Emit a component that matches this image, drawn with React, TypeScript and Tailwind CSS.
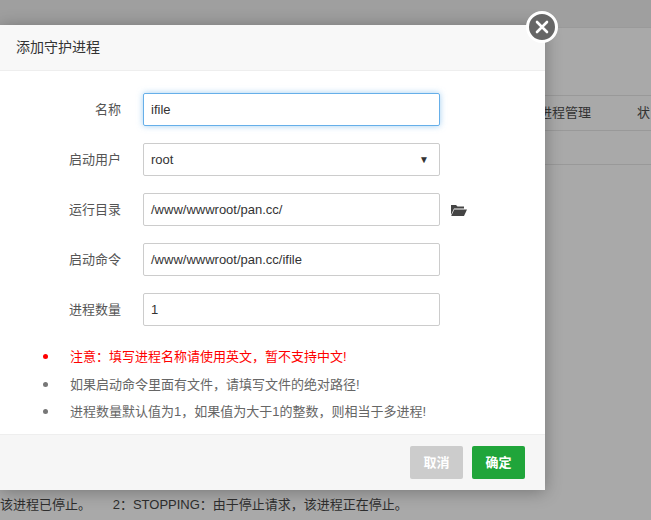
import React from 'react';

const font = { fontFamily: '"Liberation Sans", "Noto Sans CJK SC", sans-serif' };

const rows = [
  { label: '名称', value: 'ifile', focus: true },
  { label: '启动用户', value: 'root', select: true },
  { label: '运行目录', value: '/www/wwwroot/pan.cc/', folder: true },
  { label: '启动命令', value: '/www/wwwroot/pan.cc/ifile' },
  { label: '进程数量', value: '1' },
];

const tips = [
  { text: '注意：填写进程名称请使用英文，暂不支持中文!', red: true },
  { text: '如果启动命令里面有文件，请填写文件的绝对路径!' },
  { text: '进程数量默认值为1，如果值为大于1的整数，则相当于多进程!' },
];

const App: React.FC = () => {
  return (
    <div className="relative w-[651px] h-[520px] overflow-hidden bg-[#a9a9a9] text-[#333]" style={font}>
      {/* dimmed page behind */}
      <div className="h-[27px] bg-[#9f9f9f]" />
      <div className="border-t border-[#9a9a9a] h-[68px]" />
      <div className="border-t border-[#999] h-[35px] flex items-center pl-[539px] text-[13px] text-[#333] gap-[46px]">
        <span>进程管理</span><span>状</span>
      </div>
      <div className="border-t border-[#999] h-[34px]" />
      <div className="border-t border-[#999]" />
      <div className="absolute left-0 top-[495px] text-[13px] text-[#2e2e2e] whitespace-nowrap">
        该进程已停止。&nbsp;&nbsp;&nbsp;&nbsp;&nbsp;&nbsp;2：STOPPING：由于停止请求，该进程正在停止。
      </div>

      {/* modal */}
      <div className="absolute left-0 top-[25px] w-[545px] h-[465px] bg-white shadow-[0_2px_16px_rgba(0,0,0,0.3)] flex flex-col">
        <div className="h-[46px] bg-[#f8f8f8] border-b border-[#eee] flex items-center pl-[16px] text-[14px] text-[#333]">
          添加守护进程
        </div>
        <div className="flex-1 flex flex-col pt-[22px]">
          <div className="flex flex-col gap-[17px]">
            {rows.map((r) => (
              <div key={r.label} className="flex items-center">
                <div className="w-[121px] text-right text-[13px] text-[#555]">{r.label}</div>
                <div
                  className={`ml-[22px] w-[297px] h-[33px] flex items-center px-[7px] text-[13px] text-[#333] rounded-[2px] border ${
                    r.focus ? 'border-[#66afe9] shadow-[0_0_6px_rgba(102,175,233,0.6)]' : 'border-[#ccc]'
                  }`}
                >
                  <span className="flex-1">{r.value}</span>
                  {r.select && <span className="text-[10px] text-[#333] mr-[3px]">▼</span>}
                </div>
                {r.folder && (
                  <svg className="ml-[10px]" width="17" height="14" viewBox="0 0 17 14">
                    <path d="M1 2h5l1.5 1.5H14v2H4L1 12z" fill="#444" />
                    <path d="M4.2 6.5H17l-3 6.5H1.2z" fill="#444" />
                  </svg>
                )}
              </div>
            ))}
          </div>
          <ul className="mt-[21px] flex flex-col gap-[8px] text-[13px]">
            {tips.map((t) => (
              <li key={t.text} className="flex items-center">
                <span className={`ml-[43px] w-[5px] h-[5px] rounded-full ${t.red ? 'bg-[#f00]' : 'bg-[#777]'}`} />
                <span className={`ml-[22px] ${t.red ? 'text-[#f00]' : 'text-[#666]'}`}>{t.text}</span>
              </li>
            ))}
          </ul>
        </div>
        <div className="h-[56px] bg-[#f6f6f6] border-t border-[#eee] flex items-center justify-end gap-[9px] pr-[20px]">
          <button className="w-[53px] h-[33px] rounded-[2px] bg-[#ccc] text-white text-[13px] font-bold">取消</button>
          <button className="w-[53px] h-[33px] rounded-[2px] bg-[#20a53a] text-white text-[13px] font-bold">确定</button>
        </div>
      </div>

      {/* close button */}
      <div className="absolute left-[526px] top-[11px] w-[32px] h-[32px] rounded-full bg-[#666] border-[3px] border-white flex items-center justify-center">
        <svg width="14" height="14" viewBox="0 0 14 14">
          <path d="M2 2L12 12M12 2L2 12" stroke="white" strokeWidth="2.6" strokeLinecap="round" />
        </svg>
      </div>
    </div>
  );
};

export default App;
